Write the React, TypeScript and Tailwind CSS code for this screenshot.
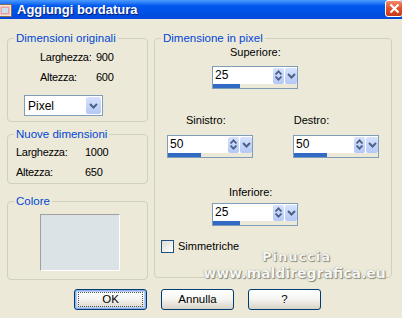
import React from "react";

function Chevron({ className = "" }: { className?: string }) {
  return (
    <svg width="9" height="6" viewBox="0 0 9 6" className={className}>
      <path d="M1 1l3.5 3.5L8 1" fill="none" stroke="#4d6185" strokeWidth="2" />
    </svg>
  );
}

function Spin({ value, bar }: { value: string; bar: number }) {
  return (
    <div className="w-[86px] h-[23px] border border-[#7f9db9] bg-white flex flex-col">
      <div className="flex h-[17px] items-center">
        <span className="flex-1 pl-[2px] text-[12px] leading-[17px]">{value}</span>
        <div className="w-[11px] h-[16px] rounded-[2px] bg-gradient-to-b from-[#d6e2fd] to-[#b4c8f6] flex flex-col items-center justify-center gap-[1px]">
          <svg width="7" height="5" viewBox="0 0 7 5">
            <path d="M0.5 4.5L3.5 1.3L6.5 4.5" fill="none" stroke="#4d6185" strokeWidth="1.8" />
          </svg>
          <svg width="7" height="5" viewBox="0 0 7 5">
            <path d="M0.5 0.5L3.5 3.7L6.5 0.5" fill="none" stroke="#4d6185" strokeWidth="1.8" />
          </svg>
        </div>
        <div className="ml-[1px] w-[12px] h-[16px] rounded-[2px] bg-gradient-to-b from-[#d6e2fd] to-[#b4c8f6] flex items-center justify-center">
          <Chevron />
        </div>
      </div>
      <div className="flex-1 bg-[#ece9d8] flex">
        <div className="h-full bg-[#316ac5]" style={{ width: bar }} />
      </div>
    </div>
  );
}

function Group({ title, className = "", children }: { title: string; className?: string; children: React.ReactNode }) {
  return (
    <fieldset className={"border border-[#d0d0bf] rounded-[4px] " + className}>
      <legend className="ml-[6px] px-[2px] text-[#0046d5] text-[11.5px] leading-[14px]">{title}</legend>
      {children}
    </fieldset>
  );
}

function Btn({ label, def = false }: { label: string; def?: boolean }) {
  return (
    <button
      className={
        "w-[73px] h-[21px] rounded-[3px] border border-[#003c74] bg-gradient-to-b from-[#ffffff] via-[#f4f4f0] to-[#d8d3c7] text-[11.5px] leading-none text-black flex items-center justify-center " +
        (def ? "shadow-[inset_0_0_0_1px_#8eb0eb,inset_0_0_0_2px_#b8cff5]" : "")
      }
    >
      {def ? (
        <span className="w-[65px] h-[15px] border border-dotted border-[#555] flex items-center justify-center">{label}</span>
      ) : (
        label
      )}
    </button>
  );
}

export default function App() {
  return (
    <div className="w-[402px] h-[318px] overflow-hidden bg-[#ece9d8] text-black font-['Liberation_Sans',Arial,sans-serif] text-[11px]">
      {/* title bar */}
      <div className="h-[19px] bg-gradient-to-b from-[#4a9bff] via-[#0058ee] via-30% to-[#0048dc] flex items-center">
        <svg width="14" height="13" viewBox="0 0 14 13" className="-ml-[2px] mt-[1px]">
          <rect x="0.5" y="0.5" width="13" height="12" fill="#f2e6d6" stroke="#8a6a50" />
          <rect x="2.5" y="2.5" width="9" height="8" fill="#e8a0a0" />
          <rect x="4" y="4" width="6" height="5" fill="#c8e0f0" />
        </svg>
        <span className="ml-[5px] text-white font-bold text-[13px] leading-none [text-shadow:1px_1px_0_#0a1e7a]">
          Aggiungi bordatura
        </span>
        <div className="ml-auto mr-[-1px] mb-[2px] w-[18px] h-[17px] rounded-[3px] border border-white bg-gradient-to-b from-[#f08a6a] via-[#e0502c] to-[#c63a18] flex items-center justify-center">
          <svg width="11" height="11" viewBox="0 0 11 11">
            <path d="M1.5 1.5l8 8M9.5 1.5l-8 8" stroke="white" strokeWidth="2.2" />
          </svg>
        </div>
      </div>

      {/* body */}
      <div className="flex pt-[12px] pl-[7px] gap-[6px]">
        <div className="w-[141px] flex flex-col">
          <Group title="Dimensioni originali" className="h-[91px]">
            <div className="pt-[5px] pl-[32px] flex flex-col gap-[6px] tracking-[-0.3px]">
              <div className="flex leading-[14px]">
                <span className="w-[56px]">Larghezza:</span>
                <span>900</span>
              </div>
              <div className="flex leading-[14px]">
                <span className="w-[56px]">Altezza:</span>
                <span>600</span>
              </div>
            </div>
            <div className="mt-[11px] ml-[16px] w-[79px] h-[21px] border border-[#7f9db9] bg-white flex items-center">
              <span className="flex-1 pl-[3px] text-[12px]">Pixel</span>
              <div className="w-[15px] h-[17px] mr-[1px] rounded-[2px] bg-gradient-to-b from-[#d6e2fd] to-[#b4c8f6] flex items-center justify-center">
                <Chevron />
              </div>
            </div>
          </Group>

          <Group title="Nuove dimensioni" className="h-[57px] mt-[5px]">
            <div className="pt-[4px] pl-[8px] flex flex-col gap-[6px] tracking-[-0.3px]">
              <div className="flex leading-[14px]">
                <span className="w-[69px]">Larghezza:</span>
                <span>1000</span>
              </div>
              <div className="flex leading-[14px]">
                <span className="w-[69px]">Altezza:</span>
                <span>650</span>
              </div>
            </div>
          </Group>

          <Group title="Colore" className="h-[86px] mt-[10px]">
            <div className="mt-[6px] ml-[32px] w-[80px] h-[57px] bg-[#dbe3e6] border border-t-[#a0a0a0] border-l-[#a0a0a0] border-b-white border-r-white" />
          </Group>
        </div>

        <Group title="Dimensione in pixel" className="relative w-[238px] h-[247px]">
          <div className="ml-[75px] leading-[14px]">Superiore:</div>
          <div className="ml-[57px] mt-[7px]">
            <Spin value="25" bar={27} />
          </div>

          <div className="flex mt-[24px] leading-[14px]">
            <span className="ml-[31px]">Sinistro:</span>
            <span className="ml-[68px]">Destro:</span>
          </div>
          <div className="flex mt-[8px] gap-[40px] ml-[12px]">
            <Spin value="50" bar={33} />
            <Spin value="50" bar={33} />
          </div>

          <div className="ml-[74px] mt-[27px] leading-[14px]">Inferiore:</div>
          <div className="ml-[57px] mt-[4px]">
            <Spin value="25" bar={27} />
          </div>

          <label className="flex items-center ml-[6px] mt-[13px] gap-[4px]">
            <span className="w-[13px] h-[13px] border border-[#1c5180] bg-gradient-to-br from-[#dcdcd7] to-white" />
            <span className="leading-[14px]">Simmetriche</span>
          </label>

          {/* watermark */}
          <div className="absolute left-[47px] top-[205px] w-[185px] flex flex-col items-center font-['DejaVu_Sans',sans-serif] font-bold text-[#f6f6f2] [text-shadow:0_0_1px_#7a7a70,1px_1px_1px_#8a8a80] leading-none">
            <span className="text-[13px] tracking-[1px] ml-[4px]">Pinuccia</span>
            <span className="text-[14px] mt-[3px]">www.maldiregrafica.eu</span>
          </div>
        </Group>
      </div>

      {/* buttons */}
      <div className="flex gap-[14px] ml-[74px] mt-[9px]">
        <Btn label="OK" def />
        <Btn label="Annulla" />
        <Btn label="?" />
      </div>
    </div>
  );
}
